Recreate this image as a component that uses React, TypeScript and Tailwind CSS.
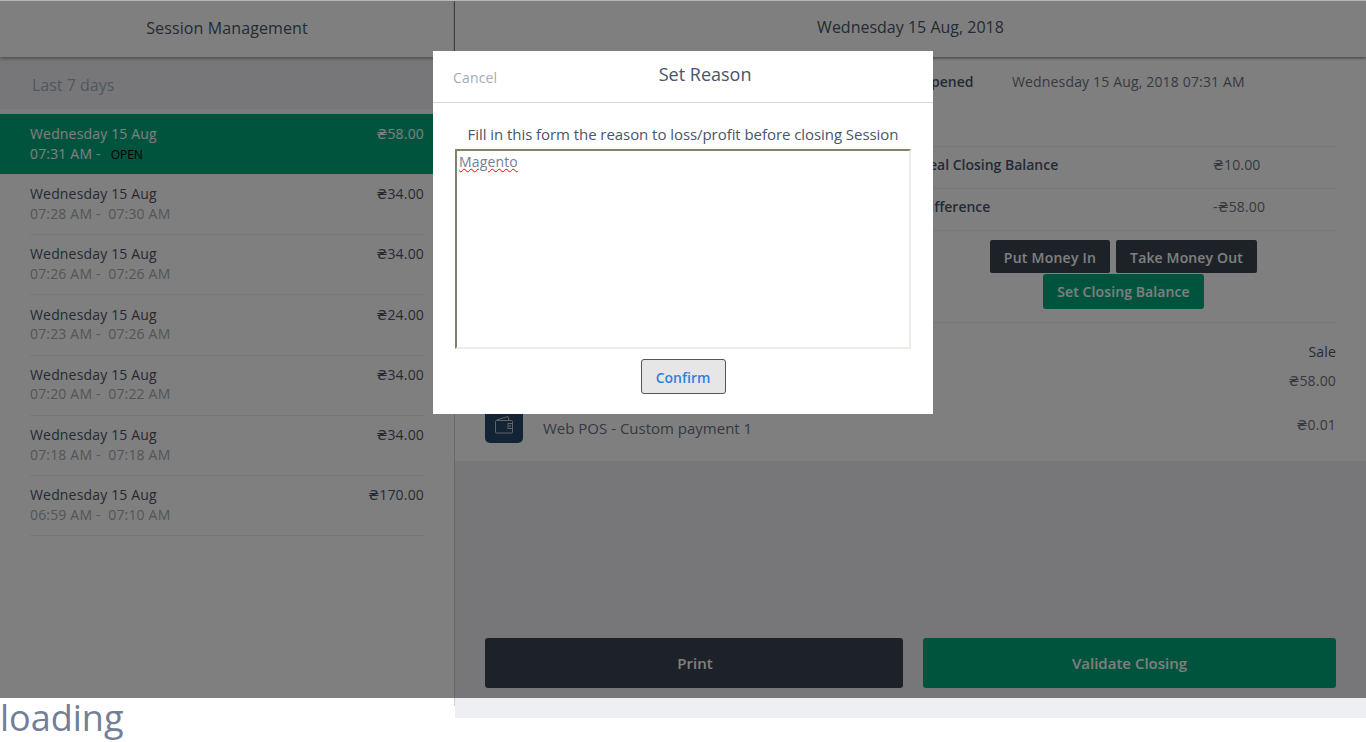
import React from "react";

const sessions = [
  { time: "07:28 AM", end: "07:30 AM", amount: "₴34.00" },
  { time: "07:26 AM", end: "07:26 AM", amount: "₴34.00" },
  { time: "07:23 AM", end: "07:26 AM", amount: "₴24.00" },
  { time: "07:20 AM", end: "07:22 AM", amount: "₴34.00" },
  { time: "07:18 AM", end: "07:18 AM", amount: "₴34.00" },
  { time: "06:59 AM", end: "07:10 AM", amount: "₴170.00" },
];

function WalletIcon() {
  return (
    <svg width="20" height="20" viewBox="0 0 20 20" fill="none" stroke="#c3c7cc" strokeWidth="1">
      <path d="M2.5 6 L14 2.5 L15 6.5" />
      <rect x="1.5" y="6.5" width="17" height="12.5" rx="1" />
      <rect x="14" y="9.5" width="4.5" height="5" />
      <circle cx="16" cy="12" r="0.6" />
    </svg>
  );
}

function Row({ label, value }: { label: string; value: string }) {
  return (
    <div className="flex h-[42px] items-start border-b border-[#eeeff3] pl-[9px] pt-2 text-sm leading-5">
      <span className="w-[293px] font-semibold text-[#4a5568]">{label}</span>
      <span className="tracking-[0.16px] text-[#6b7482]">{value}</span>
    </div>
  );
}

export default function App() {
  return (
    <div className="relative bg-white font-['Open_Sans','DejaVu_Sans',sans-serif]">
      <div className="flex h-[698px] items-start">
        <aside className="h-[706px] w-[455px] shrink-0 border-r border-[#cfd0d4] bg-white">
          <header className="relative -mr-px flex h-[57px] items-center justify-center border-r border-r-[#98a0aa] bg-white pb-0.5 text-base tracking-[0.11px] text-[#4a5568] shadow-[0_1px_4px_rgba(0,0,0,0.45)]">
            Session Management
          </header>
          <div className="flex h-[52px] items-center bg-[#eeeff3] pl-8 pt-1 text-base text-[#a0aec0]">Last 7 days</div>
          <div className="h-[5px] bg-[#f8f8f8]" />
          <div className="flex h-[60px] justify-between bg-[#00a87c] px-[30px] pt-[10px] text-sm leading-5 tracking-[0.17px] text-white">
            <div>
              <div>Wednesday 15 Aug</div>
              <div className="flex items-center">
                <span>07:31 AM -</span>
                <span className="ml-[10px] mt-0.5 text-xs tracking-normal text-black">OPEN</span>
              </div>
            </div>
            <div>₴58.00</div>
          </div>
          <div className="pt-px">
            {sessions.map((s, i) => (
              <div key={i} className="mx-[30px] flex h-[60.2px] justify-between border-b border-[#eeeff3] pt-[9.3px] text-sm leading-[19.6px] tracking-[0.17px]">
                <div>
                  <div className="text-[#4a5568]">Wednesday 15 Aug</div>
                  <div className="text-[#a8abb1]">
                    {s.time} -&nbsp; {s.end}
                  </div>
                </div>
                <div className="text-[#4a5568]">{s.amount}</div>
              </div>
            ))}
          </div>
        </aside>

        <main className="flex h-[718px] flex-1 flex-col bg-[#eeeff3]">
          <header className="relative flex h-[57px] shrink-0 items-center justify-center bg-white pb-1 text-base text-[#4a5568] shadow-[0_1px_3px_rgba(0,0,0,0.55)]">
            Wednesday 15 Aug, 2018
          </header>
          <section className="h-[404px] shrink-0 bg-white px-[30px]">
            <div className="ml-auto w-[425px]">
              <div className="flex h-[89px] items-start pl-[9px] pt-[14px] text-sm leading-[22px]">
                <span className="w-[92px] font-semibold text-[#4a5568]">Opened</span>
                <span className="tracking-[0.16px] text-[#6b7482]">Wednesday 15 Aug, 2018 07:31 AM</span>
              </div>
              <div className="border-t border-[#eeeff3]">
                <Row label="Real Closing Balance" value="₴10.00" />
                <Row label="Difference" value="-₴58.00" />
              </div>
              <div className="mt-[9px] flex flex-wrap justify-center gap-x-[6px]">
                <button className="h-[33px] w-[120px] rounded-[2px] bg-[#3a4552] pt-0.5 text-sm font-semibold tracking-[0.25px] text-white">Put Money In</button>
                <button className="h-[33px] w-[141px] rounded-[2px] bg-[#3a4552] pt-0.5 text-sm font-semibold tracking-[0.15px] text-white">Take Money Out</button>
                <button className="mt-px h-[35px] w-[161px] rounded-[3px] bg-[#00a87c] text-sm font-semibold tracking-[0.1px] text-white">Set Closing Balance</button>
              </div>
            </div>
            <div className="mt-[13px] border-t border-[#eeeff3] pt-[19px] text-right text-sm leading-5 tracking-[0.15px] text-[#4a5568]">Sale</div>
            <div className="flex h-[43px] items-start justify-between pt-[9px] text-sm leading-5 tracking-[0.17px] text-[#6b7482]">
              <span>Web POS - Cash</span>
              <span>₴58.00</span>
            </div>
            <div className="flex items-start justify-between text-sm leading-5">
              <div className="flex items-start">
                <div className="flex h-[38px] w-[38px] items-center justify-center rounded-[5px] bg-[#27486b]">
                  <WalletIcon />
                </div>
                <span className="ml-5 mt-[13px] text-[15px] text-[#6b7482]">Web POS - Custom payment 1</span>
              </div>
              <span className="mt-[10px] tracking-[0.17px] text-[#6b7482]">₴0.01</span>
            </div>
          </section>
          <footer className="mt-auto flex gap-5 px-[30px] pb-[30px]">
            <button className="h-[50px] w-[418px] rounded-[3px] bg-[#3a4552] pl-0.5 text-[15px] font-semibold text-white">Print</button>
            <button className="h-[50px] flex-1 rounded-[3px] bg-[#00a87c] text-[15px] font-semibold text-white">Validate Closing</button>
          </footer>
        </main>
      </div>

      <div className="-mt-0.5 text-4xl leading-[44px] text-[#718096]">loading</div>

      <div className="absolute inset-x-0 top-0 h-[698px] border-t border-[#b8b8b8] bg-black/50" />

      <div className="absolute left-[433px] top-[51px] h-[363px] w-[500px] bg-white">
        <div className="flex h-[52px] items-start border-b border-[#d5d6da] px-5">
          <span className="pt-4 text-sm leading-[22px] tracking-[0.15px] text-[#a8abb1]">Cancel</span>
          <span className="flex-1 pt-2.5 text-center text-lg leading-[26px] text-[#4a5568]">Set Reason</span>
        </div>
        <p className="pt-[21px] text-center text-[15px] leading-5 tracking-[-0.06px] text-[#4a5568]">
          Fill in this form the reason to loss/profit before closing Session
        </p>
        <div className="mx-[22px] mt-[5px] h-[200px] border-2 border-b-[#ecece8] border-l-[#85816f] border-r-[#ecece8] border-t-[#85816f] px-[2px] pt-px text-sm leading-5 tracking-[0.15px] text-[#718096]">
          <span className="underline decoration-[#ff0000] decoration-wavy decoration-1">Magento</span>
        </div>
        <div className="mt-[10px] flex justify-center">
          <button className="h-[35px] w-[85px] rounded-[3px] border border-[#555555] bg-[#e6e6e6] pt-0.5 text-sm font-semibold text-[#2d82dc]">Confirm</button>
        </div>
      </div>
    </div>
  );
}
